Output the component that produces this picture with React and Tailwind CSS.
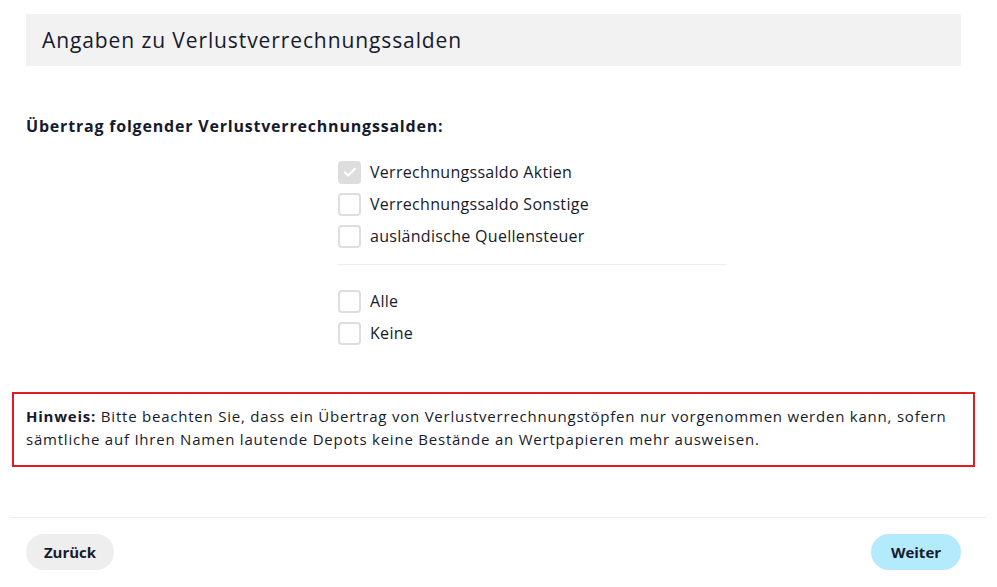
import React from 'react';

const options = [
  { label: 'Verrechnungssaldo Aktien', checked: true, disabled: true },
  { label: 'Verrechnungssaldo Sonstige' },
  { label: 'ausländische Quellensteuer' },
];

const shortcuts = [{ label: 'Alle' }, { label: 'Keine' }];

function Checkbox({ label, checked, disabled }) {
  return (
    <label className="flex items-center h-8 gap-[9px] cursor-pointer">
      <span
        className={
          'w-[23px] h-[23px] rounded-[4px] flex items-center justify-center ' +
          (disabled ? 'bg-[#dddddd]' : 'border-2 border-[#dedede] bg-white')
        }
      >
        {checked && (
          <svg width="16" height="16" viewBox="0 0 16 16" fill="none">
            <path d="M3 8.4l3.2 3.1L13 4.8" stroke="white" strokeWidth="2.2" strokeLinecap="round" strokeLinejoin="round" />
          </svg>
        )}
      </span>
      <span className="text-[16px] tracking-[0.3px] text-[#161a2c]">{label}</span>
    </label>
  );
}

export default function App() {
  return (
    <div className="w-full min-h-[587px] bg-white pl-[26px] pr-[36px] pt-[14px] text-[#161a2c]" style={{ fontFamily: '"Open Sans", Lato, sans-serif' }}>
      <div className="h-[52px] bg-[#f2f2f2] flex items-center pl-4 pt-[2px]">
        <h1 className="text-[21px] tracking-[0.9px] font-normal">Angaben zu Verlustverrechnungssalden</h1>
      </div>

      <h2 className="mt-12 text-[16px] leading-6 tracking-[0.8px] font-bold">Übertrag folgender Verlustverrechnungssalden:</h2>

      <div className="ml-[312px] mt-[18px] w-[388px]">
        {options.map(o => (
          <Checkbox key={o.label} {...o} />
        ))}
        <div className="mt-3 h-px bg-[#ececec]" />
        <div className="mt-5">
          {shortcuts.map(o => (
            <Checkbox key={o.label} {...o} />
          ))}
        </div>
      </div>

      <div className="-mx-[14px] mt-[43px] border-2 border-[#e31b23] px-3 pt-[11px] pb-[14px] text-[15px] leading-[23px] tracking-[0.78px]">
        <p>
          <strong className="font-bold">Hinweis:</strong> Bitte beachten Sie, dass ein Übertrag von Verlustverrechnungstöpfen nur vorgenommen werden kann, sofern sämtliche auf Ihren Namen lautende Depots keine Bestände an Wertpapieren mehr ausweisen.
        </p>
      </div>

      <div className="-ml-4 -mr-[26px] mt-[50px] h-px bg-[#ececec]" />

      <div className="flex justify-between pt-4">
        <button className="h-9 w-[88px] rounded-full bg-[#eeeeee] text-[15px] font-bold text-[#161a2c]">Zurück</button>
        <button className="h-9 w-[90px] rounded-full bg-[#b3ebfd] text-[15px] font-bold text-[#161a2c]">Weiter</button>
      </div>
    </div>
  );
}
